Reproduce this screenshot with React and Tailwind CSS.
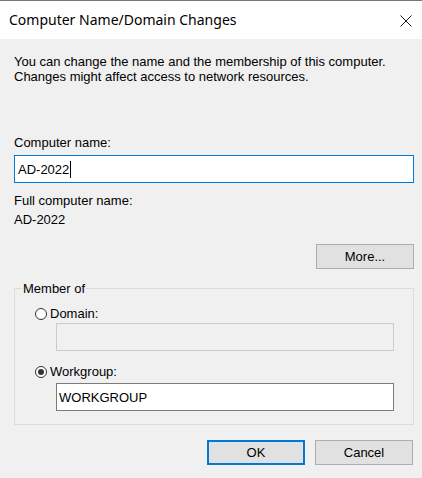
import React from 'react';

const body = { fontFamily: '"Liberation Sans", Arial, sans-serif' };

function Radio({ checked }) {
  return (
    <span className="flex h-[12px] w-[12px] shrink-0 items-center justify-center rounded-full border border-[#333333] bg-white">
      {checked && <span className="h-[6px] w-[6px] rounded-full bg-[#333333]" />}
    </span>
  );
}

function Button({ children, primary }) {
  return (
    <button
      type="button"
      className={
        primary
          ? 'flex h-[25px] w-[98px] items-center justify-center border-2 border-[#0078d7] bg-[#e1e1e1] text-[13px] text-black'
          : 'flex h-[25px] w-[98px] items-center justify-center border border-[#adadad] bg-[#e1e1e1] text-[13px] text-black'
      }
    >
      {children}
    </button>
  );
}

export default function App() {
  return (
    <div className="h-[478px] w-[422px] overflow-hidden border-t border-[#777777] bg-[#f0f0f0] text-black">
      <div className="flex h-[38px] items-center justify-between bg-white pl-[9px] pr-[10px]">
        <span
          className="text-[14px] leading-[20px] text-black"
          style={{ fontFamily: '"Noto Sans", "Open Sans", sans-serif' }}
        >
          Computer Name/Domain Changes
        </span>
        <svg width="12" height="12" viewBox="0 0 12 12" className="mt-[1px]">
          <path d="M0.5 0.5 L11.5 11.5 M11.5 0.5 L0.5 11.5" stroke="#1a1a1a" strokeWidth="1" fill="none" />
        </svg>
      </div>

      <div className="pl-[14px] pr-[8px] pt-[15px] text-[13px] leading-[15px]" style={body}>
        <p>
          You can change the name and the membership of this computer.
          <br />
          Changes might affect access to network resources.
        </p>

        <div className="mt-[51px]">Computer name:</div>
        <div className="mt-[5px] flex h-[28px] w-[400px] items-center border border-[#0078d7] bg-white pl-[3px]">
          <span>AD-2022</span>
          <span className="ml-[1px] h-[17px] w-[1px] bg-black" />
        </div>

        <div className="mt-[10px]">Full computer name:</div>
        <div className="mt-[4px]">AD-2022</div>

        <div className="mt-[17px] flex justify-end">
          <Button>More...</Button>
        </div>

        <fieldset className="mt-[12px] w-[400px] border border-[#dcdcdc] pb-[13px] pl-[20px]">
          <legend className="-ml-[13px] px-[1px] leading-[15px]">Member of</legend>

          <div className="mt-[10px] flex items-center gap-[3px]">
            <Radio />
            <span>Domain:</span>
          </div>
          <div className="ml-[21px] mt-[2px] h-[28px] w-[338px] border border-[#cccccc] bg-[#f0f0f0]" />

          <div className="mt-[13px] flex items-center gap-[3px]">
            <Radio checked />
            <span>Workgroup:</span>
          </div>
          <div className="ml-[21px] mt-[4px] flex h-[28px] w-[338px] items-center border border-[#7a7a7a] bg-white pl-[2px]">
            WORKGROUP
          </div>
        </fieldset>

        <div className="mt-[15px] flex justify-end gap-[10px] pr-[1px]">
          <Button primary>OK</Button>
          <Button>Cancel</Button>
        </div>
      </div>
    </div>
  );
}
